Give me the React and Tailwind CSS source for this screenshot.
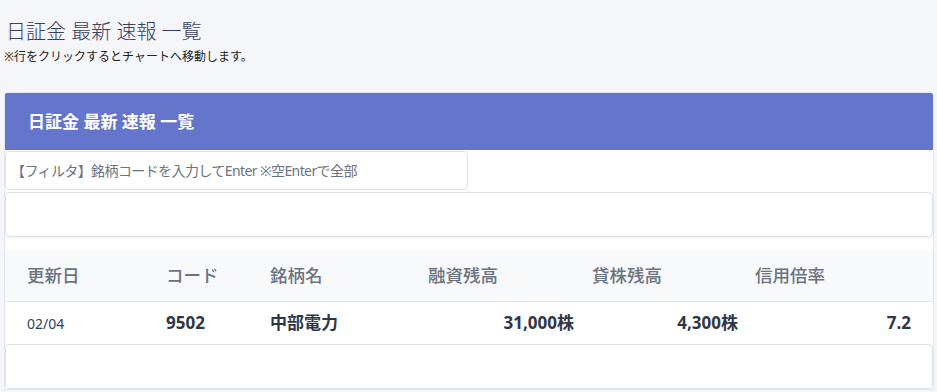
const headers = ["更新日", "コード", "銘柄名", "融資残高", "貸株残高", "信用倍率"];

const rows = [
  { date: "02/04", code: "9502", name: "中部電力", loan: "31,000株", lend: "4,300株", ratio: "7.2" },
];

export default function App() {
  return (
    <div className="min-h-screen bg-[#f5f6fa] font-['Noto_Sans','Noto_Sans_CJK_JP',sans-serif] text-[#333]">
      {/* page title */}
      <div className="px-[6px] pt-[19px]">
        <h1 className="text-[20px] leading-[26px] font-light text-[#3b3f5c]">日証金 最新 速報 一覧</h1>
        <p className="mt-[3px] text-[12px] leading-[18px] -ml-[2px] text-[#222]">※行をクリックするとチャートへ移動します。</p>
      </div>

      {/* card */}
      <div className="ml-[4px] mr-[3px] mt-[26px] bg-white border border-[#e3e6ea] rounded-t-[3px] overflow-hidden">
        <div className="h-[57px] bg-[#6675cc] flex items-center px-[23px]">
          <h2 className="text-[17px] font-bold text-white">日証金 最新 速報 一覧</h2>
        </div>

        <div className="pt-[1px]">
          <input
            type="text"
            placeholder="【フィルタ】銘柄コードを入力してEnter ※空Enterで全部"
            className="block w-[463px] h-[39px] px-[5px] text-[14px] tracking-[-0.6px] border border-[#dfe2e6] rounded-[4px] placeholder:text-[#6b7280] outline-none"
          />
          <div className="mt-[2px] h-[45px] border border-[#dfe2e6] rounded-[4px] shadow-[0_2px_3px_rgba(0,0,0,0.04)]" />
        </div>

        {/* table */}
        <div className="mt-[13px]">
          <div className="grid grid-cols-[139px_104px_158px_164px_163px_1fr] h-[52px] items-center bg-[#f8f9fa] border-b border-[#e3e6ea] text-[17.5px] font-medium text-[#6b7280]">
            {headers.map((h) => (
              <div key={h} className="pl-[22px]">{h}</div>
            ))}
          </div>
          {rows.map((r) => (
            <div
              key={r.code}
              className="grid grid-cols-[139px_104px_158px_190px_164px_1fr] h-[42px] items-center text-[#2d3748] cursor-pointer"
            >
              <div className="pl-[22px] text-[14px] text-[#374151]">{r.date}</div>
              <div className="pl-[22px] text-[17px] font-bold">{r.code}</div>
              <div className="pl-[22px] text-[17px] font-bold">{r.name}</div>
              <div className="pr-[22px] text-right text-[17px] font-bold">{r.loan}</div>
              <div className="pr-[22px] text-right text-[17px] font-bold">{r.lend}</div>
              <div className="pr-[22px] text-right text-[17px] font-bold">{r.ratio}</div>
            </div>
          ))}
          <div className="h-[45px] border border-[#dfe2e6] rounded-[4px]" />
        </div>
      </div>
    </div>
  );
}
